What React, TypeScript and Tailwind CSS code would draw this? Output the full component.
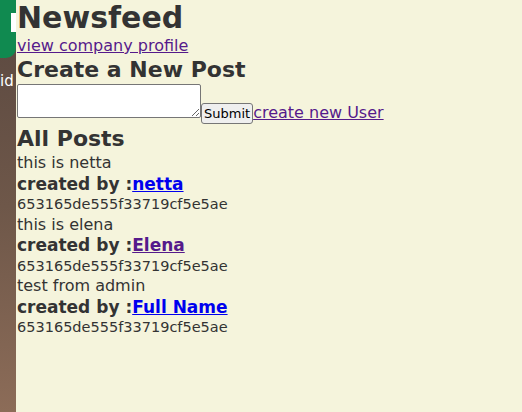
import React from 'react';

interface Post {
  text: string;
  author: string;
  visited: boolean;
  companyId: string;
}

const posts: Post[] = [
  { text: 'this is netta', author: 'netta', visited: false, companyId: '653165de555f33719cf5e5ae' },
  { text: 'this is elena', author: 'Elena', visited: true, companyId: '653165de555f33719cf5e5ae' },
  { text: 'test from admin', author: 'Full Name', visited: false, companyId: '653165de555f33719cf5e5ae' },
];

const Sidebar: React.FC = () => (
  <div className="relative w-[16px] shrink-0 overflow-hidden bg-gradient-to-b from-[#5a4840] via-[#6e5749] to-[#8c6c58]">
    <div className="h-[58px] rounded-br-[10px] bg-[#108a50]" />
    <div className="absolute left-[11px] top-[13px] h-[19px] w-[6px] bg-white" />
    <span className="absolute left-[0px] top-[73px] text-[15px] leading-[17px] text-white">id</span>
  </div>
);

const App: React.FC = () => {
  return (
    <div className="flex min-h-[412px] w-[522px] bg-[#f5f4dc] font-['DejaVu_Sans',sans-serif] text-[#333333]">
      <Sidebar />
      <main className="flex-1 pl-[1px]">
        <h1 className="text-[30px] font-bold leading-[36px]">Newsfeed</h1>
        <a href="#" className="block text-[16px] leading-[19px] text-[#551a8b] underline">
          view company profile
        </a>
        <h2 className="text-[22px] font-bold leading-[29px]">Create a New Post</h2>
        <form className="flex items-end" onSubmit={(e) => e.preventDefault()}>
          <textarea className="h-[34px] w-[184px] rounded-[2px] border border-[#767676] bg-white" />
          <button
            type="submit"
            className="mb-[-6px] h-[21px] rounded-[3px] border border-[#767676] bg-[#efefef] px-[2px] text-[13px] leading-[16px] text-black"
          >
            Submit
          </button>
          <a href="#" className="mb-[-5px] text-[16px] leading-[20px] text-[#551a8b] underline">
            create new User
          </a>
        </form>
        <h2 className="mt-[6px] text-[22px] font-bold leading-[29px]">All Posts</h2>
        <div className="leading-[20.5px]">
          {posts.map((p) => (
            <div key={p.author}>
              <div className="text-[16px]">{p.text}</div>
              <div className="text-[17px] font-bold">
                created by :
                <a href="#" className={`underline ${p.visited ? 'text-[#551a8b]' : 'text-[#0000ee]'}`}>
                  {p.author}
                </a>
              </div>
              <div className="text-[14.5px]">{p.companyId}</div>
            </div>
          ))}
        </div>
      </main>
    </div>
  );
};

export default App;
